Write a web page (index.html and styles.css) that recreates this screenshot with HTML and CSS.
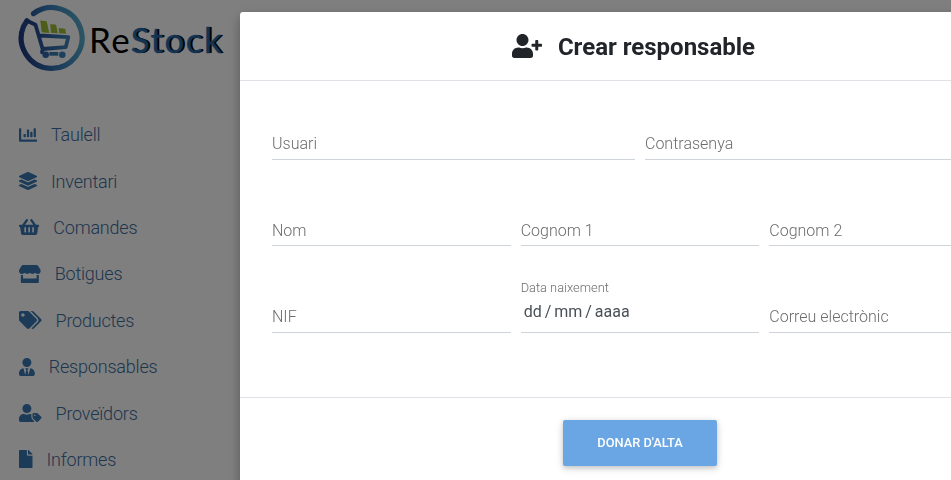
FILE: index.html
```html
<!DOCTYPE html>
<html lang="ca">
<head>
<meta charset="utf-8">
<title>ReStock</title>
<link rel="stylesheet" href="styles.css">
</head>
<body>
<aside class="sidebar">
  <div class="brand">
  <svg class="logo" width="68" height="74" viewBox="18 0 68 74">
    <defs>
      <linearGradient id="ring" x1="0" y1="0.6" x2="1" y2="0.4"><stop offset="0" stop-color="#203a80"/><stop offset=".5" stop-color="#3679b8"/><stop offset="1" stop-color="#55a8c6"/></linearGradient>
      <linearGradient id="cart" gradientUnits="userSpaceOnUse" x1="27" y1="30" x2="70" y2="34"><stop offset="0" stop-color="#203f86"/><stop offset="1" stop-color="#3d83b8"/></linearGradient>
    </defs>
    <path d="M33.500 13.600A30.400 30.400 0 1 1 23.500 26.500L27 20.700" fill="none" stroke="url(#ring)" stroke-width="5.200" stroke-linecap="round" stroke-linejoin="round"/>
    <path d="M27 20.700l8.500 4 7.200 24.600-.7 3M39.500 35.500l28.800 1.600-2.500 10L42.700 49" fill="none" stroke="url(#cart)" stroke-width="3.800" stroke-linecap="round" stroke-linejoin="round"/>
    <path d="M49.300 52h9v3.700h-9z" fill="#367db5"/>
    <circle cx="45.700" cy="54.700" r="3.300" fill="#3068aa"/><circle cx="62.300" cy="54.700" r="3.300" fill="#3a82ba"/>
    <path d="M40.300 20.500l6.400.7 2.600 11.800-7.600-.8zM50.300 24l5.700.7 1.900 8.600-7-.5zM58.700 28l6.400.7 1 5-6.900-.4z" fill="#98bd35"/>
  </svg>
  <span class="wordmark">Re<b>Stock</b></span>
  </div>
  <nav class="menu">
    <a><svg viewBox="0 0 512 512"><path d="M332.8 320h38.4c6.400 0 12.800-6.400 12.800-12.800V172.800c0-6.400-6.400-12.800-12.800-12.800h-38.400c-6.400 0-12.800 6.400-12.800 12.800v134.400c0 6.400 6.400 12.800 12.800 12.800zm96 0h38.400c6.400 0 12.800-6.400 12.800-12.800V76.800c0-6.400-6.400-12.800-12.800-12.800h-38.400c-6.400 0-12.800 6.400-12.800 12.800v230.400c0 6.400 6.400 12.800 12.800 12.800zm-288 0h38.400c6.400 0 12.800-6.400 12.800-12.800v-70.400c0-6.400-6.400-12.800-12.800-12.800h-38.400c-6.400 0-12.800 6.400-12.800 12.800v70.400c0 6.400 6.400 12.800 12.800 12.800zm96 0h38.400c6.400 0 12.800-6.400 12.800-12.800V108.800c0-6.400-6.400-12.800-12.800-12.800h-38.400c-6.400 0-12.800 6.400-12.800 12.800v198.400c0 6.400 6.400 12.800 12.800 12.800zM496 384H64V80c0-8.840-7.160-16-16-16H16C7.160 64 0 71.160 0 80v336c0 17.670 14.330 32 32 32h464c8.840 0 16-7.160 16-16v-32c0-8.840-7.160-16-16-16z"/></svg><span>Taulell</span></a>
    <a><svg viewBox="0 0 512 512"><path d="M12.410 148.020l232.940 105.670c6.800 3.090 14.490 3.090 21.290 0l232.940-105.670c16.550-7.510 16.550-32.520 0-40.030L266.650 2.310a25.607 25.607 0 0 0-21.290 0L12.410 107.980c-16.550 7.510-16.550 32.530 0 40.040zm487.180 88.280l-58.090-26.330-161.640 73.270c-7.560 3.430-15.590 5.170-23.860 5.170s-16.290-1.740-23.860-5.170L70.510 209.970l-58.100 26.330c-16.550 7.500-16.550 32.500 0 40l232.940 105.590c6.800 3.080 14.490 3.080 21.290 0L499.590 276.300c16.550-7.500 16.550-32.500 0-40zm0 127.800l-57.870-26.230-161.860 73.370c-7.560 3.430-15.590 5.170-23.860 5.170s-16.290-1.740-23.860-5.170L70.290 337.870 12.410 364.100c-16.550 7.500-16.550 32.500 0 40l232.940 105.590c6.800 3.080 14.490 3.080 21.290 0L499.590 404.100c16.550-7.500 16.550-32.500 0-40z"/></svg><span>Inventari</span></a>
    <a><svg viewBox="0 0 576 512"><path d="M576 216v16c0 13.255-10.745 24-24 24h-8l-26.113 182.788C514.509 462.435 494.257 480 470.370 480H105.630c-23.887 0-44.139-17.565-47.518-41.212L32 256h-8c-13.255 0-24-10.745-24-24v-16c0-13.255 10.745-24 24-24h67.341l106.780-146.821c10.395-14.292 30.407-17.453 44.701-7.058 14.293 10.395 17.453 30.408 7.058 44.701L170.477 192h235.046L326.120 82.821c-10.395-14.292-7.234-34.306 7.059-44.701 14.291-10.395 34.306-7.235 44.701 7.058L484.659 192H552c13.255 0 24 10.745 24 24zM312 392V280c0-13.255-10.745-24-24-24s-24 10.745-24 24v112c0 13.255 10.745 24 24 24s24-10.745 24-24zm112 0V280c0-13.255-10.745-24-24-24s-24 10.745-24 24v112c0 13.255 10.745 24 24 24s24-10.745 24-24zm-224 0V280c0-13.255-10.745-24-24-24s-24 10.745-24 24v112c0 13.255 10.745 24 24 24s24-10.745 24-24z"/></svg><span>Comandes</span></a>
    <a><svg viewBox="0 0 616 512"><path d="M602 118.600L537.100 15C531.300 5.700 521 0 510 0H106C95 0 84.700 5.700 78.900 15L14 118.600c-33.500 53.500-3.800 127.900 58.800 136.400 4.500.6 9.100.9 13.700.9 29.600 0 55.800-13 73.800-33.100 18 20.100 44.300 33.100 73.800 33.100 29.600 0 55.800-13 73.800-33.100 18 20.100 44.300 33.100 73.800 33.100 29.600 0 55.800-13 73.800-33.100 18.100 20.100 44.300 33.100 73.800 33.100 4.700 0 9.200-.3 13.700-.9 62.800-8.400 92.600-82.800 59-136.400zM529.500 288c-10 0-19.900-1.500-29.500-3.800V384H116v-99.800c-9.600 2.200-19.500 3.800-29.500 3.800-6 0-12.100-.4-18-1.200-5.600-.8-11.100-2.100-16.400-3.600V480c0 17.700 14.300 32 32 32h448c17.700 0 32-14.300 32-32V283.200c-5.400 1.600-10.800 2.900-16.400 3.600-6.100.8-12.100 1.200-18.200 1.200z"/></svg><span>Botigues</span></a>
    <a><svg viewBox="0 0 640 512"><path d="M497.941 225.941L286.059 14.059A48 48 0 0 0 252.118 0H48C21.490 0 0 21.490 0 48v204.118a48 48 0 0 0 14.059 33.941l211.882 211.882c18.744 18.745 49.136 18.746 67.882 0l204.118-204.118c18.745-18.745 18.745-49.137 0-67.882zM112 160c-26.510 0-48-21.490-48-48s21.490-48 48-48 48 21.490 48 48-21.490 48-48 48zm513.941 133.823L421.823 497.941c-18.745 18.745-49.137 18.745-67.882 0l-.36-.36L527.640 323.522c16.999-16.999 26.360-39.600 26.360-63.640s-9.362-46.641-26.360-63.640L331.397 0h48.721a48 48 0 0 1 33.941 14.059l211.882 211.882c18.745 18.745 18.745 49.137 0 67.882z"/></svg><span>Productes</span></a>
    <a><svg viewBox="0 0 448 512"><path d="M224 256c70.700 0 128-57.300 128-128S294.700 0 224 0 96 57.300 96 128s57.300 128 128 128zm95.800 32.600L272 480l-32-136 32-56h-96l32 56-32 136-47.800-191.400C56.900 292 0 350.300 0 422.400V464c0 26.500 21.500 48 48 48h352c26.500 0 48-21.500 48-48v-41.600c0-72.100-56.900-130.400-128.200-133.800z"/></svg><span>Responsables</span></a>
    <a><svg viewBox="0 0 640 512"><path d="M630.600 364.900l-90.300-90.200c-12-12-28.300-18.700-45.300-18.700h-79.300c-17.700 0-32 14.300-32 32v79.200c0 17 6.700 33.200 18.700 45.200l90.300 90.200c12.500 12.500 32.800 12.500 45.300 0l92.500-92.500c12.600-12.500 12.600-32.700.1-45.200zm-182.800-21c-13.300 0-24-10.700-24-24s10.700-24 24-24 24 10.700 24 24c0 13.200-10.700 24-24 24zm-223.800-88c70.700 0 128-57.300 128-128C352 57.300 294.700 0 224 0S96 57.300 96 128c0 70.600 57.300 127.900 128 127.900zm127.800 111.200V294c-12.200-3.600-24.900-6.200-38.200-6.200h-16.700c-22.200 10.200-46.900 16-72.900 16s-50.600-5.800-72.900-16h-16.700C60.200 287.900 0 348.100 0 422.300v41.600c0 26.500 21.500 48 48 48h352c15.500 0 29.100-7.500 37.900-18.900l-58-58c-18.100-18.100-28.100-42.200-28.100-67.900z"/></svg><span>Proveïdors</span></a>
    <a><svg viewBox="0 0 384 512"><path d="M224 136V0H24C10.700 0 0 10.700 0 24v464c0 13.300 10.700 24 24 24h336c13.300 0 24-10.700 24-24V160H248c-13.200 0-24-10.800-24-24zm160-14.100v6.100H256V0h6.100c6.400 0 12.500 2.500 17 7l97.900 98c4.500 4.500 7 10.600 7 16.900z"/></svg><span>Informes</span></a>
  </nav>
</aside>
<div class="backdrop">
  <section class="modal" role="dialog" aria-label="Crear responsable">
    <header class="modal-header">
      <svg viewBox="0 0 640 512"><path d="M624 208h-64v-64c0-8.800-7.200-16-16-16h-32c-8.800 0-16 7.200-16 16v64h-64c-8.800 0-16 7.200-16 16v32c0 8.800 7.200 16 16 16h64v64c0 8.800 7.200 16 16 16h32c8.800 0 16-7.200 16-16v-64h64c8.800 0 16-7.200 16-16v-32c0-8.800-7.200-16-16-16zm-400 48c70.700 0 128-57.300 128-128S294.700 0 224 0 96 57.300 96 128s57.300 128 128 128zm89.600 32h-16.700c-22.200 10.200-46.900 16-72.900 16s-50.600-5.800-72.900-16h-16.700C60.200 288 0 348.200 0 422.400V464c0 26.500 21.500 48 48 48h352c26.500 0 48-21.500 48-48v-41.600c0-74.200-60.200-134.400-134.400-134.400z"/></svg>
      <h1>Crear responsable</h1>
    </header>
    <form class="modal-body">
      <div class="row two">
        <div class="field"><label>Usuari</label></div>
        <div class="field"><label>Contrasenya</label></div>
      </div>
      <div class="row three names">
        <div class="field"><label>Nom</label></div>
        <div class="field"><label>Cognom 1</label></div>
        <div class="field"><label>Cognom 2</label></div>
      </div>
      <div class="row three">
        <div class="field"><label>NIF</label></div>
        <div class="field date"><label>Data naixement</label><span>dd / mm / aaaa</span></div>
        <div class="field"><label>Correu electrònic</label></div>
      </div>
    </form>
    <footer class="modal-footer"><button type="button">DONAR D'ALTA</button></footer>
  </section>
</div>
</body>
</html>
```
FILE: styles.css
```css
* { box-sizing: border-box; }
body {
  margin: 0;
  height: 480px;
  overflow: hidden;
  background: #fff;
  font-family: Roboto, "Liberation Sans", sans-serif;
  font-weight: 300;
}
.sidebar { width: 240px; padding: 0 0 0 18px; }
.brand { display: flex; height: 74px; }
.logo { flex: none; }
.wordmark {
  padding: 18px 0 0 3px;
  color: #000;
  font: 400 35px/42px Lato, sans-serif;
  letter-spacing: 1.500px;
  white-space: nowrap;
}
.wordmark b {
  margin-left: 0;
  color: #2867a6;
  font-weight: 400;
  letter-spacing: 1.500px;
  -webkit-text-stroke: .4px #2867a6;
  text-shadow: 2px 0 #000;
}
.menu { padding: 37.500px 0 0 1px; }
.menu a {
  display: flex;
  align-items: center;
  gap: 14px;
  height: 46.400px;
  color: #3c6c9c;
  font-size: 18px;
  letter-spacing: -.2px;
}
.menu svg { height: 18px; fill: #3876b0; }
.backdrop {
  position: fixed;
  inset: 0;
  background: rgba(0, 0, 0, .5);
  padding: 12px 0 0 240px;
}
.modal {
  width: 800px;
  height: 490px;
  background: #fff;
  border-radius: 3px;
  box-shadow: 0 5px 11px rgba(0, 0, 0, .18), 0 4px 15px rgba(0, 0, 0, .15);
}
.modal-header {
  display: flex;
  justify-content: center;
  align-items: center;
  gap: 16px;
  height: 69px;
  padding-right: 13px;
  border-bottom: 1px solid #dee2e6;
  color: #212529;
}
.modal-header svg { height: 24px; fill: currentColor; }
.modal-header h1 { margin: 2px 0 0; font-size: 24px; font-weight: 700; line-height: 29px; }
.modal-body { height: 316px; padding: 25px 27px 0 32px; }
.row { display: grid; column-gap: 10px; height: 54px; margin-bottom: 32.300px; }
.two { grid-template-columns: repeat(2, 363px); }
.three { grid-template-columns: repeat(3, 238.670px); }
.field {
  display: flex;
  flex-direction: column;
  justify-content: flex-end;
  border-bottom: 1px solid #ced4da;
  padding-bottom: 6px;
  color: #6c6c6c;
  font-size: 16px;
  line-height: 19px;
}
.names .field { padding-bottom: 5px; }
.date { padding-bottom: 11px; }
.date label { font-size: 12.800px; line-height: 15px; margin-bottom: 7px; letter-spacing: .02px; }
.date span { padding-left: 3px; color: #495057; font-weight: 400; word-spacing: -1px; }
.modal-footer {
  display: flex;
  justify-content: center;
  padding-top: 22px;
  border-top: 1px solid #dee2e6;
}
button {
  width: 154px;
  height: 46px;
  padding: 0 0 2px;
  border: 0;
  border-radius: 2px;
  background: #6aa6e3;
  color: #fff;
  font: 500 12.800px Roboto, sans-serif;
  box-shadow: 0 2px 5px rgba(0, 0, 0, .16), 0 2px 10px rgba(0, 0, 0, .12);
}
```
